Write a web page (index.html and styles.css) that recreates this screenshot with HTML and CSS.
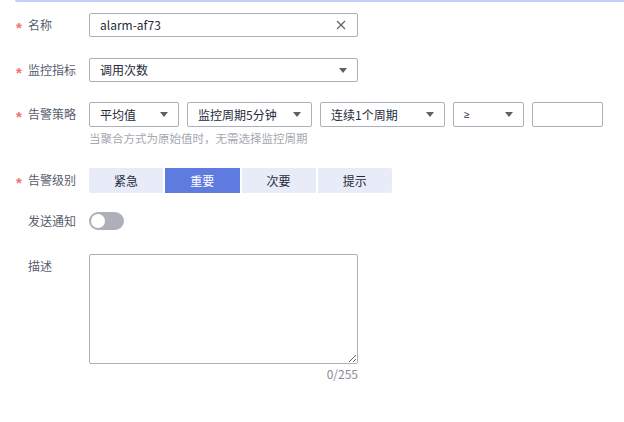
FILE: index.html
```html
<!DOCTYPE html>
<html lang="zh-CN">
<head>
<meta charset="utf-8">
<title>告警规则</title>
<link rel="stylesheet" href="styles.css">
</head>
<body>
<div class="topline"></div>
<form class="form">
  <div class="row row-name">
    <label class="label required">名称</label>
    <div class="control">
      <div class="input input-wide">
        <span class="value">alarm-af73</span>
        <svg class="clear" width="10" height="10" viewBox="0 0 10 10"><path d="M1 1L9 9M9 1L1 9" stroke="#5f6169" stroke-width="1.2" fill="none"/></svg>
      </div>
    </div>
  </div>

  <div class="row row-metric">
    <label class="label required">监控指标</label>
    <div class="control">
      <div class="select input-wide">
        <span class="value">调用次数</span>
        <span class="caret"></span>
      </div>
    </div>
  </div>

  <div class="row row-policy">
    <label class="label required">告警策略</label>
    <div class="control">
      <div class="policy">
        <div class="select sel-agg"><span class="value">平均值</span><span class="caret"></span></div>
        <div class="select sel-period"><span class="value">监控周期5分钟</span><span class="caret"></span></div>
        <div class="select sel-period"><span class="value">连续1个周期</span><span class="caret"></span></div>
        <div class="select sel-op"><span class="value op">≥</span><span class="caret"></span></div>
        <div class="input sel-op"></div>
      </div>
      <div class="hint">当聚合方式为原始值时，无需选择监控周期</div>
    </div>
  </div>

  <div class="row row-level">
    <label class="label required">告警级别</label>
    <div class="control">
      <div class="levels">
        <span class="level">紧急</span>
        <span class="level active">重要</span>
        <span class="level">次要</span>
        <span class="level">提示</span>
      </div>
    </div>
  </div>

  <div class="row row-notify">
    <label class="label">发送通知</label>
    <div class="control">
      <span class="switch"><span class="knob"></span></span>
    </div>
  </div>

  <div class="row row-desc">
    <label class="label">描述</label>
    <div class="control">
      <textarea class="textarea"></textarea>
      <div class="counter">0/255</div>
    </div>
  </div>
</form>
</body>
</html>
```

FILE: styles.css
```css
* { box-sizing: border-box; }

html, body {
  margin: 0;
  padding: 0;
  background: #ffffff;
}

body {
  font-family: "Noto Sans CJK SC", "Noto Sans", sans-serif;
  font-size: 12px;
  color: #252b3a;
  width: 624px;
  height: 422px;
  overflow: hidden;
}

.topline {
  margin-left: 15px;
  height: 2px;
  background: #c3cef8;
  border-bottom-left-radius: 2px;
}

.form {
  display: flex;
  flex-direction: column;
  padding-top: 11px;
}

.row {
  display: flex;
  align-items: flex-start;
}

.label {
  width: 89px;
  flex: none;
  padding-left: 28px;
  line-height: 24px;
  color: #575d6c;
  position: relative;
}

.label.required::before {
  content: "*";
  position: absolute;
  left: 16px;
  top: 3px;
  color: #f66f6a;
  font-family: "Liberation Sans", sans-serif;
  font-size: 15px;
  font-weight: bold;
  line-height: 24px;
}

.control {
  display: flex;
  flex-direction: column;
}

.input, .select {
  height: 24px;
  border: 1px solid #adb0b8;
  border-radius: 2px;
  display: flex;
  align-items: center;
  padding: 0 9px 0 10px;
  background: #fff;
}

.input-wide { width: 269px; }

.value {
  flex: 1;
  white-space: nowrap;
  color: #252b3a;
  line-height: 22px;
}

.op {
  font-family: "Liberation Sans", sans-serif;
  font-size: 10px;
}

.clear { flex: none; margin-right: 2px; }

.caret {
  flex: none;
  width: 0;
  height: 0;
  border-left: 4px solid transparent;
  border-right: 4px solid transparent;
  border-top: 5px solid #5f6169;
  margin-right: 1px;
}

.row-metric { margin-top: 21px; }
.row-policy { margin-top: 20px; }
.row-policy .select, .row-policy .input { height: 25px; }

.policy {
  display: flex;
  gap: 8px;
}

.sel-agg { width: 90px; }
.sel-period { width: 125px; }
.sel-op { width: 71px; }

.hint {
  margin-top: 3px;
  line-height: 17px;
  color: #a5a8b0;
  font-size: 11.5px;
}

.row-level { margin-top: 21px; }

.levels {
  display: flex;
  gap: 2px;
  width: 303px;
}

.level {
  flex: 1;
  height: 25px;
  line-height: 25px;
  text-align: center;
  background: #e8ecf9;
  color: #252b3a;
}

.level:first-child { border-radius: 2px 0 0 2px; }
.level:last-child { border-radius: 0 2px 2px 0; }

.level.active {
  background: #5e7ce0;
  color: #ffffff;
}

.row-notify { margin-top: 16px; }

.switch {
  margin-top: 3px;
  width: 35px;
  height: 18px;
  border-radius: 9px;
  background: #adb0b8;
  display: flex;
  align-items: center;
  padding-left: 2px;
}

.knob {
  width: 14px;
  height: 14px;
  border-radius: 50%;
  background: #ffffff;
}

.row-desc { margin-top: 21px; }

.textarea {
  width: 269px;
  height: 110px;
  border: 1px solid #adb0b8;
  border-radius: 2px;
  resize: vertical;
  margin: 0;
  padding: 4px 10px;
  font-family: inherit;
  font-size: 12px;
  display: block;
  outline: none;
}

.counter {
  text-align: right;
  color: #8a8e99;
  line-height: 16px;
  margin-top: 2px;
}
```
